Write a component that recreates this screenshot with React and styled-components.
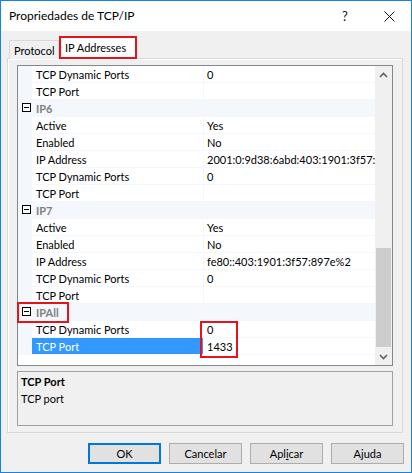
import React from 'react';
import styled, { createGlobalStyle } from 'styled-components';

const GlobalStyle = createGlobalStyle`
  html, body {
    margin: 0;
    padding: 0;
    background: #ffffff;
  }
  body {
    font-family: Lato, "Noto Sans", sans-serif;
    font-size: 11px;
    color: #000;
  }
`;

const Window = styled.div`
  width: 412px;
  height: 473px;
  box-sizing: border-box;
  border: 1px solid #1883d7;
  background: #f0f0f0;
  display: flex;
  flex-direction: column;
`;

const TitleBar = styled.div`
  height: 30px;
  background: #ffffff;
  display: flex;
  align-items: center;
  padding-left: 8px;
`;

const Title = styled.div`
  flex: 1;
  font-size: 12px;
  margin-top: -2px;
`;

const TitleButton = styled.div`
  width: 44px;
  height: 30px;
  display: flex;
  align-items: center;
  justify-content: center;
  font-size: 13px;
  color: #111;
`;

const Body = styled.div`
  flex: 1;
  display: flex;
  flex-direction: column;
  padding: 6px 8px 0 6px;
`;

const TabRow = styled.div`
  display: flex;
  align-items: flex-end;
  padding-left: 2px;
  height: 22px;
  position: relative;
  z-index: 1;
  margin-bottom: -1px;
`;

const Tab = styled.div`
  box-sizing: border-box;
  width: ${p => p.$w}px;
  height: ${p => (p.$active ? '23px' : '19px')};
  padding: ${p => (p.$active ? '2px 0 0 4px' : '2px 0 0 4px')};
  border: ${p => (p.$active ? '2px solid #e3141c' : '1px solid #d9d9d9')};
  border-bottom: ${p => (p.$active ? '2px solid #e3141c' : 'none')};
  background: ${p => (p.$active ? '#ffffff' : '#f0f0f0')};
  white-space: nowrap;
  line-height: 15px;
`;

const Panel = styled.div`
  box-sizing: border-box;
  height: 375px;
  border: 1px solid #d9d9d9;
  box-shadow: inset 1px 1px 0 #ffffff;
  background: #f0f0f0;
  padding: 6px 9px 6px 9px;
  display: flex;
  flex-direction: column;
  gap: 5px;
`;

const Grid = styled.div`
  box-sizing: border-box;
  height: 301px;
  border: 1px solid #828790;
  background: #ffffff;
  display: flex;
`;

const List = styled.div`
  flex: 1;
  position: relative;
  display: flex;
  flex-direction: column;
`;

const Row = styled.div`
  display: grid;
  grid-template-columns: 14px 172px 1fr;
  height: 17px;
  line-height: 17px;
`;

const Gutter = styled.div`
  background: #f4f7fc;
  display: flex;
  align-items: center;
  justify-content: center;
`;

const NameCell = styled.div`
  padding-left: 4px;
  border-right: 1px solid #f4f7fc;
  border-bottom: 1px solid #f4f7fc;
  background: ${p => (p.$selected ? '#3399ff' : '#ffffff')};
  color: ${p => (p.$selected ? '#ffffff' : '#000000')};
  white-space: nowrap;
  overflow: hidden;
`;

const ValueCell = styled.div`
  padding-left: 3px;
  border-bottom: 1px solid #f4f7fc;
  white-space: nowrap;
  overflow: hidden;
`;

const CategoryCell = styled.div`
  grid-column: 2 / span 2;
  background: #f4f7fc;
  padding-left: 4px;
  font-weight: bold;
  color: #808080;
`;

const MinusBox = styled.div`
  box-sizing: border-box;
  width: 9px;
  height: 9px;
  border: 1px solid #000;
  background: #fff;
  display: flex;
  align-items: center;
  justify-content: center;
  margin-top: -3px;
  margin-left: 2px;

  &::after {
    content: '';
    width: 5px;
    height: 1px;
    background: #000;
  }
`;

const Mark = styled.div`
  position: absolute;
  box-sizing: border-box;
  border: 2px solid #e3141c;
  left: ${p => p.$x}px;
  top: ${p => p.$y}px;
  width: ${p => p.$w}px;
  height: ${p => p.$h}px;
`;

const ScrollBar = styled.div`
  width: 17px;
  background: #f0f0f0;
  display: flex;
  flex-direction: column;
`;

const ScrollArrow = styled.div`
  height: 17px;
  display: flex;
  align-items: center;
  justify-content: center;
`;

const Track = styled.div`
  flex: 1;
  display: flex;
  flex-direction: column;
`;

const Thumb = styled.div`
  margin: 165px 1px 0 1px;
  height: 99px;
  background: #cdcdcd;
`;

const Description = styled.div`
  box-sizing: border-box;
  height: 55px;
  border: 1px solid #a0a0a0;
  background: #f0f0f0;
  padding: 1px 3px;
  line-height: 17px;
`;

const DescTitle = styled.div`
  font-weight: bold;
`;

const ButtonRow = styled.div`
  display: flex;
  justify-content: flex-end;
  gap: 8px;
  margin-top: 10px;
  margin-right: -1px;
`;

const Button = styled.div`
  box-sizing: border-box;
  width: 73px;
  height: 21px;
  border: ${p => (p.$default ? '2px solid #0078d7' : '1px solid #adadad')};
  background: #e1e1e1;
  display: flex;
  align-items: center;
  justify-content: center;
`;

const rows = [
  { name: 'TCP Dynamic Ports', value: '0' },
  { name: 'TCP Port', value: '' },
  { cat: 'IP6' },
  { name: 'Active', value: 'Yes' },
  { name: 'Enabled', value: 'No' },
  { name: 'IP Address', value: '2001:0:9d38:6abd:403:1901:3f57:897e' },
  { name: 'TCP Dynamic Ports', value: '0' },
  { name: 'TCP Port', value: '' },
  { cat: 'IP7' },
  { name: 'Active', value: 'Yes' },
  { name: 'Enabled', value: 'No' },
  { name: 'IP Address', value: 'fe80::403:1901:3f57:897e%2' },
  { name: 'TCP Dynamic Ports', value: '0' },
  { name: 'TCP Port', value: '' },
  { cat: 'IPAll' },
  { name: 'TCP Dynamic Ports', value: '0' },
  { name: 'TCP Port', value: '1433', selected: true },
];

const Chevron = ({ down }) => (
  <svg width="9" height="6" viewBox="0 0 9 6">
    <path
      d={down ? 'M1 1 L4.5 4.5 L8 1' : 'M1 5 L4.5 1.5 L8 5'}
      fill="none"
      stroke="#606060"
      strokeWidth="1.6"
    />
  </svg>
);

const CloseIcon = () => (
  <svg width="11" height="11" viewBox="0 0 11 11">
    <path d="M0.5 0.5 L10.5 10.5 M10.5 0.5 L0.5 10.5" stroke="#111" strokeWidth="1" />
  </svg>
);

export default function App() {
  return (
    <>
      <GlobalStyle />
      <Window>
        <TitleBar>
          <Title>Propriedades de TCP/IP</Title>
          <TitleButton>?</TitleButton>
          <TitleButton>
            <CloseIcon />
          </TitleButton>
        </TitleBar>
        <Body>
          <TabRow>
            <Tab $w={50}>Protocol</Tab>
            <Tab $w={78} $active>IP Addresses</Tab>
          </TabRow>
          <Panel>
            <Grid>
              <List>
                {rows.map((r, i) =>
                  r.cat ? (
                    <Row key={i}>
                      <Gutter>
                        <MinusBox />
                      </Gutter>
                      <CategoryCell>{r.cat}</CategoryCell>
                    </Row>
                  ) : (
                    <Row key={i}>
                      <Gutter />
                      <NameCell $selected={r.selected}>{r.name}</NameCell>
                      <ValueCell>{r.value}</ValueCell>
                    </Row>
                  )
                )}
                <Mark $x={-1} $y={236} $w={52} $h={21} />
                <Mark $x={182} $y={255} $w={38} $h={37} />
              </List>
              <ScrollBar>
                <ScrollArrow>
                  <Chevron />
                </ScrollArrow>
                <Track>
                  <Thumb />
                </Track>
                <ScrollArrow>
                  <Chevron down />
                </ScrollArrow>
              </ScrollBar>
            </Grid>
            <Description>
              <DescTitle>TCP Port</DescTitle>
              <div>TCP port</div>
            </Description>
          </Panel>
          <ButtonRow>
            <Button $default>OK</Button>
            <Button>Cancelar</Button>
            <Button>
              <span>
                Apl<u>i</u>car
              </span>
            </Button>
            <Button>Ajuda</Button>
          </ButtonRow>
        </Body>
      </Window>
    </>
  );
}
